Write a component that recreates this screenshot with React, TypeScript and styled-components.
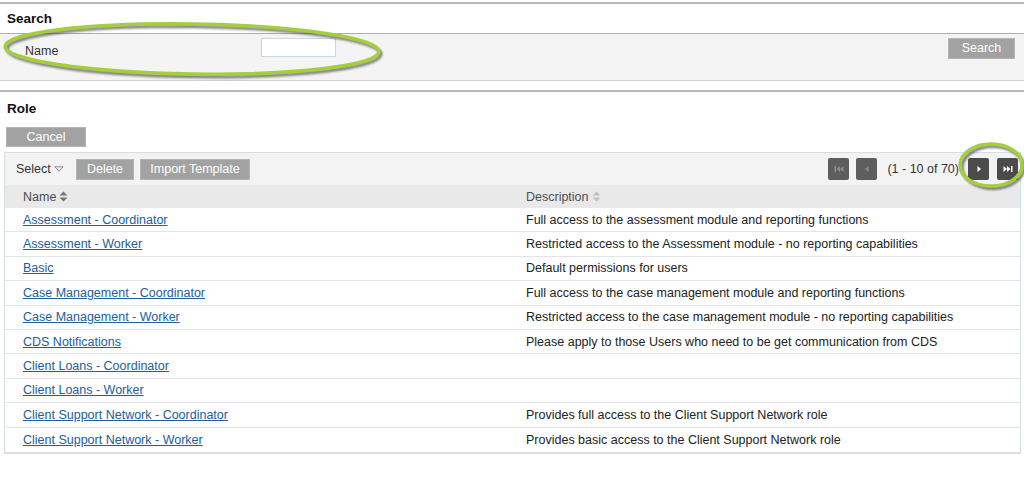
import React from 'react'
import styled, { createGlobalStyle } from 'styled-components'

const GlobalStyle = createGlobalStyle`
  html, body {
    margin: 0;
    padding: 0;
    background: #ffffff;
  }
  body {
    font-family: "Liberation Sans", Arial, Helvetica, sans-serif;
    font-size: 12.5px;
    color: #222222;
  }
`

const Page = styled.div`
  position: relative;
  width: 1024px;
  height: 488px;
  overflow: hidden;
  padding-top: 2px;
  box-sizing: border-box;
`

const Rule = styled.div<{ gap?: number }>`
  height: 2px;
  background: #b9b9b9;
  margin-top: ${p => p.gap || 0}px;
`

const SectionTitle = styled.div<{ h: number }>`
  height: ${p => p.h}px;
  line-height: ${p => p.h}px;
  padding-left: 7px;
  font-size: 13.5px;
  font-weight: bold;
  color: #111111;
`

const SearchPanel = styled.div`
  display: flex;
  align-items: flex-start;
  height: 42px;
  padding: 4px 9px 0 25px;
  background: #f4f4f4;
  border-top: 1px solid #adadad;
  border-bottom: 1px solid #cfcfcf;
`

const FieldLabel = styled.label`
  width: 236px;
  margin-top: 6px;
  line-height: 15px;
  color: #333333;
`

const TextInput = styled.input`
  width: 75px;
  height: 19px;
  box-sizing: border-box;
  border: 1px solid #c5d6e6;
  background: #ffffff;
  padding: 0 3px;
  outline: none;
`

const GreyButton = styled.button<{ w: number; h?: number }>`
  width: ${p => p.w}px;
  height: ${p => p.h || 21}px;
  padding: 0;
  border: 1px solid #b4b4b4;
  background: #a2a2a2;
  color: #ffffff;
  font-family: "Liberation Sans", Arial, sans-serif;
  font-size: 12.5px;
  line-height: 1;
  cursor: pointer;
`

const PushRight = styled.div`
  margin-left: auto;
`

const CancelRow = styled.div`
  padding: 2px 0 0 6px;
  height: 27px;
  box-sizing: border-box;
`

const Grid = styled.div`
  margin: 0 3px 0 4px;
  border: 1px solid #d6dde4;
  border-bottom: 2px solid #d8dee5;
`

const Toolbar = styled.div`
  display: flex;
  align-items: center;
  height: 32px;
  padding: 0 2px 0 11px;
  background: #f3f3f3;
  gap: 6px;
`

const SelectMenu = styled.div`
  display: flex;
  align-items: center;
  gap: 3px;
  color: #333333;
  width: 54px;
`

const Pager = styled.div`
  margin-left: auto;
  display: flex;
  align-items: center;
`

const PageButton = styled.button<{ disabled?: boolean }>`
  width: 21px;
  height: 22px;
  padding: 0;
  margin-left: ${p => (p.disabled ? 7 : 8)}px;
  border: none;
  border-radius: 2px;
  background: ${p => (p.disabled ? '#5e5e5e' : '#4b4b4b')};
  color: ${p => (p.disabled ? '#8c8c8c' : '#ffffff')};
  display: flex;
  align-items: center;
  justify-content: center;
`

const PageInfo = styled.span`
  color: #333333;
  margin: 0 1px 0 10px;
`

const Row = styled.div<{ head?: boolean }>`
  display: grid;
  grid-template-columns: 503px 1fr;
  align-items: center;
  height: ${p => (p.head ? 23 : 24.4)}px;
  box-sizing: border-box;
  background: ${p => (p.head ? '#e9e9e9' : '#ffffff')};
  border-bottom: ${p => (p.head ? 'none' : '1px solid #dfe5eb')};
  &:last-child {
    border-bottom: none;
  }
`

const Cell = styled.div`
  padding-left: 18px;
  white-space: nowrap;
`

const HeadCell = styled(Cell)`
  display: flex;
  align-items: center;
  gap: 3px;
  color: #4d4d4d;
`

const RoleLink = styled.a`
  color: #215e9c;
  text-decoration: underline;
  cursor: pointer;
`

const Highlight = styled.svg<{ $x: number; $y: number }>`
  position: absolute;
  left: ${p => p.$x}px;
  top: ${p => p.$y}px;
  pointer-events: none;
  overflow: visible;
`

const SortIcon = ({ shade }: { shade: string }) => (
  <svg width="9" height="11" viewBox="0 0 9 11">
    <path d="M0.5 4.5 L4.5 0.5 L8.5 4.5 Z" fill={shade} />
    <path d="M0.5 6.5 L4.5 10.5 L8.5 6.5 Z" fill={shade} />
  </svg>
)

const CaretOutline = () => (
  <svg width="10" height="6" viewBox="0 0 10 6">
    <path d="M0.8 0.8 L9.2 0.8 L5 5.2 Z" fill="none" stroke="#8a8a8a" strokeWidth="1" />
  </svg>
)

const PagerIcon = ({ kind }: { kind: 'first' | 'prev' | 'next' | 'last' }) => {
  if (kind === 'prev') return <svg width="8" height="8" viewBox="0 0 8 8"><path d="M5.5 1 L2 4 L5.5 7 Z" fill="currentColor" /></svg>
  if (kind === 'next') return <svg width="8" height="8" viewBox="0 0 8 8"><path d="M2.5 1 L6 4 L2.5 7 Z" fill="currentColor" /></svg>
  if (kind === 'first')
    return (
      <svg width="10" height="8" viewBox="0 0 10 8">
        <rect x="0.5" y="1" width="1.5" height="6" fill="currentColor" />
        <path d="M6 1 L2.5 4 L6 7 Z M9.5 1 L6 4 L9.5 7 Z" fill="currentColor" />
      </svg>
    )
  return (
    <svg width="10" height="8" viewBox="0 0 10 8">
      <path d="M0.5 1 L4 4 L0.5 7 Z M4 1 L7.5 4 L4 7 Z" fill="currentColor" />
      <rect x="8" y="1" width="1.5" height="6" fill="currentColor" />
    </svg>
  )
}

const Ring = ({ x, y, w, h, rx, ry, rot }: { x: number; y: number; w: number; h: number; rx: number; ry: number; rot: number }) => {
  const cx = w / 2
  const cy = h / 2
  const id = `blur${x}`
  return (
    <Highlight $x={x} $y={y} width={w} height={h} viewBox={`0 0 ${w} ${h}`}>
      <defs>
        <filter id={id} x="-10%" y="-30%" width="120%" height="160%">
          <feGaussianBlur stdDeviation="1.2" />
        </filter>
      </defs>
      <ellipse
        cx={cx + 2}
        cy={cy + 2.5}
        rx={rx}
        ry={ry}
        fill="none"
        stroke="#4a4a4a"
        strokeWidth="3"
        opacity="0.75"
        filter={`url(#${id})`}
        transform={`rotate(${rot} ${cx} ${cy})`}
      />
      <ellipse
        cx={cx}
        cy={cy}
        rx={rx}
        ry={ry}
        fill="none"
        stroke="#a4cf3c"
        strokeWidth="3.5"
        transform={`rotate(${rot} ${cx} ${cy})`}
      />
    </Highlight>
  )
}

const roles = [
  { name: 'Assessment - Coordinator', desc: 'Full access to the assessment module and reporting functions' },
  { name: 'Assessment - Worker', desc: 'Restricted access to the Assessment module - no reporting capabilities' },
  { name: 'Basic', desc: 'Default permissions for users' },
  { name: 'Case Management - Coordinator', desc: 'Full access to the case management module and reporting functions' },
  { name: 'Case Management - Worker', desc: 'Restricted access to the case management module - no reporting capabilities' },
  { name: 'CDS Notifications', desc: 'Please apply to those Users who need to be get communication from CDS' },
  { name: 'Client Loans - Coordinator', desc: '' },
  { name: 'Client Loans - Worker', desc: '' },
  { name: 'Client Support Network - Coordinator', desc: 'Provides full access to the Client Support Network role' },
  { name: 'Client Support Network - Worker', desc: 'Provides basic access to the Client Support Network role' }
]

export default function App() {
  return (
    <Page>
      <GlobalStyle />
      <Rule />
      <SectionTitle h={29}>Search</SectionTitle>
      <SearchPanel>
        <FieldLabel htmlFor="role-name">Name</FieldLabel>
        <TextInput id="role-name" />
        <PushRight>
          <GreyButton w={67}>Search</GreyButton>
        </PushRight>
      </SearchPanel>
      <Rule gap={9} />
      <SectionTitle h={33}>Role</SectionTitle>
      <CancelRow>
        <GreyButton w={80} h={20}>Cancel</GreyButton>
      </CancelRow>

      <Grid>
        <Toolbar>
          <SelectMenu>
            Select <CaretOutline />
          </SelectMenu>
          <GreyButton w={58}>Delete</GreyButton>
          <GreyButton w={110}>Import Template</GreyButton>
          <Pager>
            <PageButton disabled>
              <PagerIcon kind="first" />
            </PageButton>
            <PageButton disabled>
              <PagerIcon kind="prev" />
            </PageButton>
            <PageInfo>(1 - 10 of 70)</PageInfo>
            <PageButton>
              <PagerIcon kind="next" />
            </PageButton>
            <PageButton>
              <PagerIcon kind="last" />
            </PageButton>
          </Pager>
        </Toolbar>
        <Row head>
          <HeadCell>
            Name <SortIcon shade="#777777" />
          </HeadCell>
          <HeadCell>
            Description <SortIcon shade="#c2c2c2" />
          </HeadCell>
        </Row>
        {roles.map(role => (
          <Row key={role.name}>
            <Cell>
              <RoleLink>{role.name}</RoleLink>
            </Cell>
            <Cell>{role.desc}</Cell>
          </Row>
        ))}
      </Grid>

      <Ring x={0} y={17} w={384} h={64} rx={187} ry={25} rot={0.8} />
      <Ring x={957} y={142} w={68} h={46} rx={31} ry={21} rot={0} />
    </Page>
  )
}
